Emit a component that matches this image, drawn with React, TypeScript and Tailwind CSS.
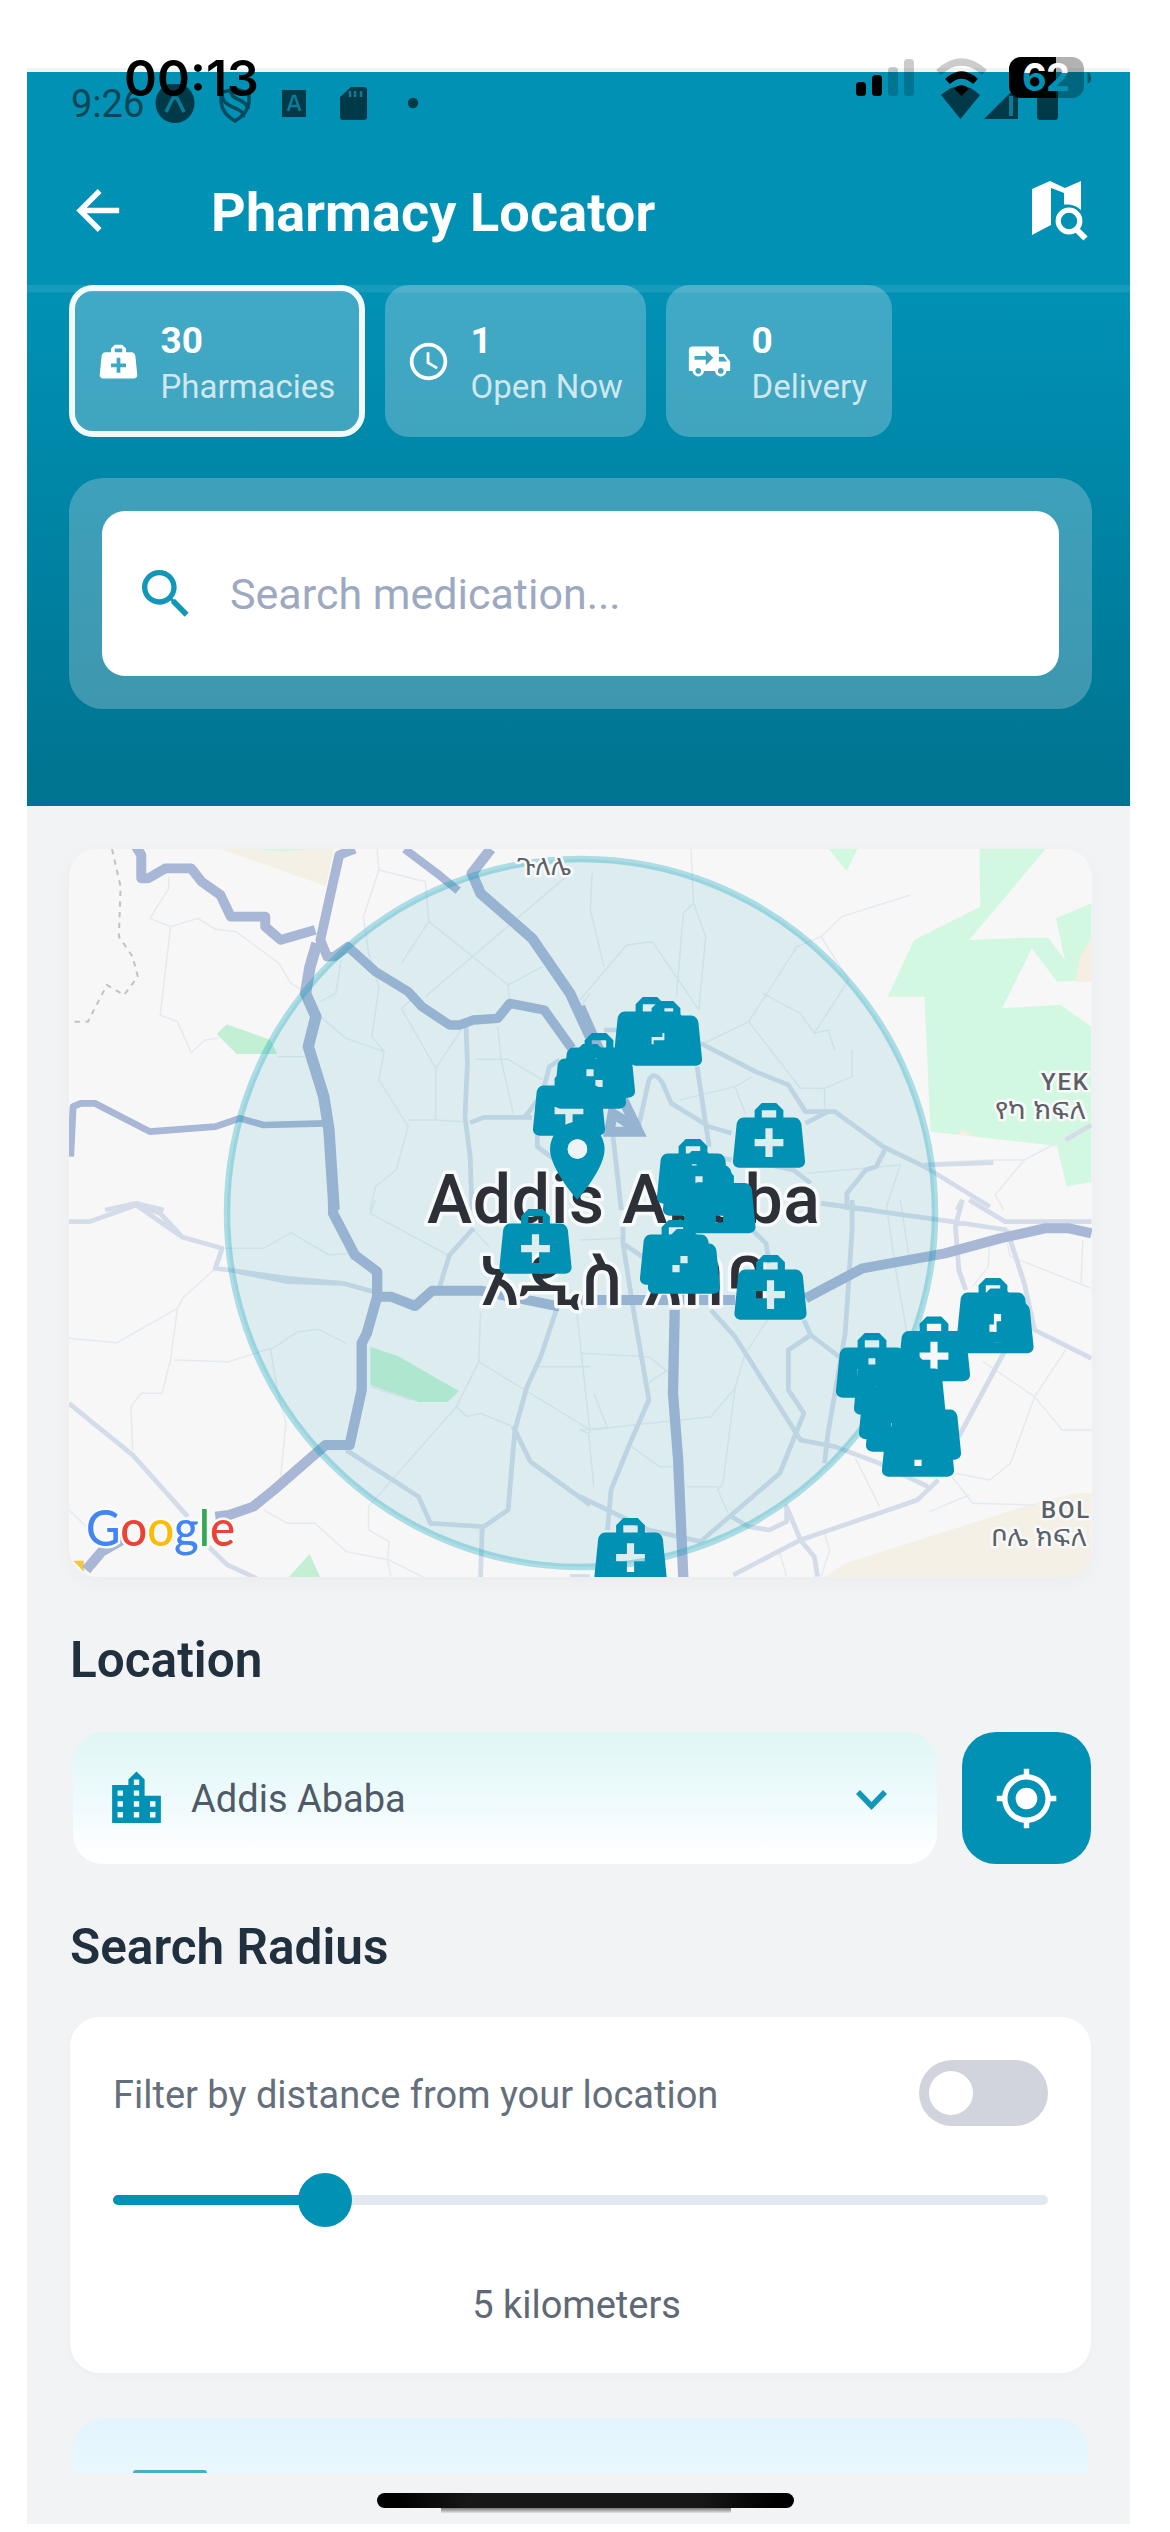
import React from "react";

const BAG =
  "M10,3L8,5V7H5C3.85,7 3.12,8 3,9L2,19C1.88,20 2.54,21 4,21H20C21.46,21 22.12,20 22,19L21,9C20.88,8 20.06,7 19,7H16V5L14,3H10M10,5H14V7H10V5M11,10H13V13H16V15H13V18H11V15H8V13H11V10Z";
const CLOCK =
  "M12,20A8,8 0 0,0 20,12A8,8 0 0,0 12,4A8,8 0 0,0 4,12A8,8 0 0,0 12,20M12,2A10,10 0 0,1 22,12A10,10 0 0,1 12,22C6.47,22 2,17.5 2,12A10,10 0 0,1 12,2M12.5,7V12.25L17,14.92L16.25,16.15L11,13V7H12.5Z";
const TRUCK =
  "M3 4A2 2 0 0 0 1 6V17H3A3 3 0 0 0 6 20A3 3 0 0 0 9 17H15A3 3 0 0 0 18 20A3 3 0 0 0 21 17H23V12L20 8H17V4M10 6L14 10L10 14V11H4V9H10M17 9.5H19.5L21.47 12H17M6 15.5A1.5 1.5 0 0 1 7.5 17A1.5 1.5 0 0 1 6 18.5A1.5 1.5 0 0 1 4.5 17A1.5 1.5 0 0 1 6 15.5M18 15.5A1.5 1.5 0 0 1 19.5 17A1.5 1.5 0 0 1 18 18.5A1.5 1.5 0 0 1 16.5 17A1.5 1.5 0 0 1 18 15.5Z";
const ARROW = "M20,11V13H8L13.5,18.5L12.08,19.92L4.16,12L12.08,4.08L13.5,5.5L8,11H20Z";
const SEARCH =
  "M15.5 14h-.79l-.28-.27C15.41 12.59 16 11.11 16 9.5 16 5.91 13.09 3 9.5 3S3 5.91 3 9.5 5.91 16 9.5 16c1.61 0 3.09-.59 4.23-1.57l.27.28v.79l5 4.99L20.49 19l-4.99-5zm-6 0C7.01 14 5 11.99 5 9.5S7.01 5 9.5 5 14 7.01 14 9.5 11.99 14 9.5 14z";
const CITY =
  "M15 11V5l-3-3-3 3v2H3v14h18V11h-6zm-8 8H5v-2h2v2zm0-4H5v-2h2v2zm0-4H5V9h2v2zm6 8h-2v-2h2v2zm0-4h-2v-2h2v2zm0-4h-2V9h2v2zm0-4h-2V5h2v2zm6 12h-2v-2h2v2zm0-4h-2v-2h2v2z";
const GPS =
  "M12 8c-2.21 0-4 1.79-4 4s1.79 4 4 4 4-1.79 4-4-1.79-4-4-4zm8.94 3c-.46-4.17-3.77-7.48-7.94-7.94V1h-2v2.06C6.83 3.52 3.52 6.83 3.06 11H1v2h2.06c.46 4.17 3.77 7.48 7.94 7.94V23h2v-2.06c4.17-.46 7.48-3.77 7.94-7.94H23v-2h-2.06zM12 19c-3.87 0-7-3.13-7-7s3.13-7 7-7 7 3.13 7 7-3.13 7-7 7z";

function Icon({ d, className }: { d: string; className: string }) {
  return (
    <svg viewBox="0 0 24 24" className={className} fill="currentColor" fillRule="evenodd">
      <path d={d} />
    </svg>
  );
}

function MapSearch() {
  return (
    <svg viewBox="0 0 58 61" className="h-[61px] w-[58px]" fill="white">
      <path d="M1 9 19 1 20 7.500V45L1 55Z" />
      <path d="M19 1 34 8 50 1V30C45 25.500 40 24 33 24.500V13L19 7.500Z" />
      <circle cx="38" cy="41" r="10.800" fill="none" stroke="white" strokeWidth="5.200" />
      <path d="M45 49 54.500 58.500" stroke="white" strokeWidth="6" />
    </svg>
  );
}

function AndroidIcons() {
  return (
    <svg viewBox="0 0 280 40" className="ml-[6px] h-[40px] w-[280px]" fill="#003a48">
      <ellipse cx="24" cy="19" rx="19.500" ry="20" />
      <path d="M15 28 22 14H26L33 28" stroke="#0a7c98" strokeWidth="3.500" fill="none" />
      <path d="M84 4C76 8 73 8 70 8V18C71 28 77 33 84 37C91 33 97 28 98 18V8C95 8 91 8 84 4Z" fill="none" stroke="#004a5c" strokeWidth="3.500" />
      <path d="M71 10C71 20 80 22 86 25S93 31 92 33M80 7C80 14 88 15 92 18S97 23 97 25" fill="none" stroke="#004a5c" strokeWidth="3.500" />
      <path d="M131 6H155V33H131Z" />
      <path d="M137 27 142 12H144L149 27M139 22H147" fill="none" stroke="#0a7c98" strokeWidth="2.500" />
      <path d="M200 3H213Q216 3 216 6V33Q216 36 213 36H192Q189 36 189 33V13Z" />
      <path d="M199 7V13M204 7V13M210 7V13" stroke="#0a7c98" strokeWidth="2.500" />
      <circle cx="262" cy="19" r="5.200" />
    </svg>
  );
}

function StatusOverlay() {
  return (
    <div className="absolute top-[52px] left-0 flex h-[52px] w-[1170px] items-center">
      <span className="ml-[124px] w-[200px] font-['Inter'] text-[50px] leading-[52px] font-semibold text-black">00:13</span>
      <svg viewBox="0 0 250 52" className="ml-[526px] h-[52px] w-[250px] shrink-0">
        <rect x="6" y="30" width="10" height="14" rx="3.500" />
        <rect x="22" y="23" width="10" height="21" rx="3.500" />
        <rect x="38" y="15" width="10" height="29" rx="3.500" opacity=".2" />
        <rect x="54" y="7" width="10" height="37" rx="3.500" opacity=".2" />
        <path d="M88.500 20.500Q111.500-.5 134.500 20.500" fill="none" stroke="#000" strokeOpacity=".2" strokeWidth="7" />
        <path d="M97.500 29.500Q111.500 16.500 125.500 29.500" fill="none" stroke="#000" strokeWidth="7" />
        <path d="M104 36.500Q111.500 29.500 119 36.500L111.500 44Z" />
        <path d="M206 5H222A12 12 0 0 1 234 17V34A12 12 0 0 1 222 46H206Z" opacity=".3" />
        <path d="M206 5H171A12 12 0 0 0 159 17V34A12 12 0 0 0 171 46H206Z" />
        <path d="M237.500 20Q241 21 241 26T237.500 31.500Z" opacity=".4" />
        <defs>
          <linearGradient id="pct" gradientUnits="userSpaceOnUse" x1="0" x2="0" y1="16" y2="26">
            <stop offset="0" stopColor="#fff" />
            <stop offset=".5" stopColor="#eeeef6" />
            <stop offset=".5" stopColor="#0092b5" />
          </linearGradient>
        </defs>
        <text x="172" y="39" textLength="48" fontFamily="Inter" fontWeight="700" fontSize="38" fill="url(#pct)">62</text>
      </svg>
    </div>
  );
}

function Chip({ d, n, label, className }: { d: string; n: string; label: string; className: string }) {
  return (
    <div className={`flex h-[152px] shrink-0 items-center rounded-[24px] bg-[#d5e5ed]/30 pl-[21px] text-white ${className}`}>
      <Icon d={d} className="h-[45px] w-[45px] shrink-0" />
      <div className="ml-[20px] pt-[5px]">
        <div className="text-[37px] leading-[46px] font-bold">{n}</div>
        <div className="text-[33px] leading-[45px] whitespace-nowrap text-white/75">{label}</div>
      </div>
    </div>
  );
}

const pins: [number, number][] = [
  [581, 148], [597, 152], [530, 184], [521, 195], [500, 222], [700, 254], [624, 290], [630, 302],
  [650.5, 319.500], [607, 371], [615, 380], [701.5, 406], [924, 429], [928.5, 439.500], [865, 467.500],
  [803, 484], [821, 501], [840.5, 505], [826, 525.500], [833, 538], [856, 546], [849, 563], [561.5, 669], [466.5, 360],
];

function Roads({ thin, minor, major }: { thin: string; minor: string; major: string }) {
  return (
    <g fill="none" strokeLinejoin="round">
      <path d={thin} stroke="#e5eaf0" strokeWidth="4.500" />
      <path d={minor} stroke="#d3dce8" strokeWidth="14" />
      <path d={major} stroke="#a8b7d5" strokeWidth="30" />
    </g>
  );
}

function CityMap() {
  return (
    <svg viewBox="0 0 1023 728" className="h-[728px] w-[1023px]">
      <rect width="1023" height="728" fill="#f7f7f7" />
      {/* north-west */}
      <g transform="translate(-19 -19) scale(.3444 .3333)">
        <path d="M495 57H825L800 168Z" fill="#f4f0e5" />
        <path d="M600 57H750Q680 72 600 57Z" fill="#d3f8e2" />
        <path d="M513 583 640 630 660 672H542L484 612Z" fill="#c3f0d4" />
        <Roads
          thin="M345 140V175L290 265 350 290 320 555 370 575 410 668 450 630 490 625M350 290 430 265 480 298 540 305 665 400 700 460 730 480M950 57 955 120 1090 155 1100 275 1330 465 1430 410M955 120 910 260 925 370 955 470 935 620 970 665 955 750 1040 890 1005 1020 945 1070 930 1140M1100 275 1020 400M1510 130 1090 500M845 390 830 490 785 515M785 560 860 625 970 665M1060 500 1020 535 1120 715 1200 590M1120 715V870H1040M1120 870 1200 875M1300 590 1310 690 1345 850M1235 688H1330L1430 750M660 680H740M1330 465 1335 510M1568 490 1540 530"
          minor="M1208 590 1212 700 1205 860 1220 980 1225 1140M1220 878 1260 862H1400M1480 690 1450 710 1430 790 1380 860M1415 910V950L1460 985M160 1140 250 1120 330 1140"
          major=""
        />
        <g fill="none" stroke="#a8b7d5" strokeLinejoin="round">
          <path d="M250 50 265 75V145H285L335 115H410L440 155 495 195 525 260H625V290L670 330 770 300" strokeWidth="29" />
          <path d="M885 57 840 75 815 190 785 330 805 380H825L865 350 945 425 1040 485 1080 530 1160 585H1190L1230 570 1300 565 1335 520 1435 540 1515 655" strokeWidth="28" />
          <path d="M1030 57 1130 135 1185 182" strokeWidth="24" />
          <path d="M1280 57 1225 130 1250 190 1400 325 1510 490 1568 620" strokeWidth="31" />
          <path d="M775 340 755 410 742 490 772 560 750 650 795 800 810 900 825 1140" strokeWidth="33" />
          <path d="M60 980 67 830 90 820H130L290 905 480 890 550 865 620 885 800 880" strokeWidth="20" />
        </g>
        <path d="M180 57 205 170 200 320 240 380 255 440 215 495 165 465 110 575H70" fill="none" stroke="#c3c3c3" strokeWidth="6" strokeDasharray="16 16" />
      </g>
      {/* north-east */}
      <g transform="translate(511 -19) scale(.3444 .3333)">
        <g fill="#d3f8e2">
          <path d="M722 57H806L774 123Z" />
          <path d="M1160 57H1352L1130 330 1300 323H1360L1408 390 1382 265 1485 220V590L1395 524 1226 535 1312 355 1385 455 1485 450V1055L1413 1070 1385 948 1150 920 1018 905 1000 500H893L970 330 1162 230Z" />
        </g>
        <path d="M1385 455 1485 450V590L1395 524 1226 535 1312 355Z" fill="#f7f7f7" />
        <path d="M1485 325V455H1438L1452 380ZM1095 915 1112 897 1140 918Z" fill="#f6eee2" />
        <Roads
          thin="M322 57 330 220 365 320 345 540M330 220 300 250 280 500M0 510 135 345 210 335 345 540M35 130 30 240 70 410M960 195 760 260 700 320 630 350 490 575 350 645M700 320 780 450 680 610 640 550 530 490M490 575 640 775H710L790 740V660M290 810 450 770 500 740M450 770 480 850M680 610 720 600 740 660M710 775V840M1000 1000 1190 990 1290 990 1400 930 1485 890M1290 990 1205 1095 1230 1140M660 1030 930 1005 890 1130"
          minor="M350 640 510 725 605 765 655 845H740L880 950 1000 1010 1190 1130M1000 1005 1200 998M655 880 720 845M170 890 200 750Q215 720 240 760L265 820 375 890 440 910M340 710 375 950M885 960 860 1010 830 1020 775 1090V1140M95 910 120 1140M700 1120 850 1140M1110 1110 1095 1140M1410 930 1485 885M460 985 620 1020 670 1060M70 600 110 600M380 975 440 990"
          major=""
        />
        <path d="M0 530 60 670 170 905H85L95 850 170 900" fill="none" stroke="#a8b7d5" strokeWidth="30" />
      </g>
      {/* south-west */}
      <g transform="translate(-19 351) scale(.3444 .3333)">
        <path d="M930 440 1010 468 1187 573 1155 606H1070L930 555Z" fill="#c3f0d4" />
        <path d="M754 1062 786 1135H690Z" fill="#c3f0d4" />
        <path d="M68 1082H98V1115Z" fill="#f3c63d" />
        <Roads
          thin="M55 415 195 428 370 325 385 295 480 205M370 325 350 480 325 580H265L235 620 240 750M360 480 520 485 640 445 660 570 685 670 670 830M640 450 720 395 780 388 860 430M510 145H620L700 98 810 165 870 160M945 0 930 40 1155 165M1250 340 1245 485 1568 690M1245 485 1180 620 925 920V990L985 1025 980 1080 990 1130M620 930 690 970H770L860 1055 985 1080 1090 1135M55 930 110 985M930 560 1050 600M1180 620 1210 650 1250 640 1345 680M1410 500H1568M1530 340 1545 480 1568 700M1230 90 1275 140"
          minor="M55 65H115L250 15 320 40 385 112 500 145 480 205 520 210 690 245 850 250 940 275M250 15 385 112M530 212 690 235 850 250M1230 85 1160 165 1130 265M55 610 240 765 400 950M460 1040 515 1095 600 1135M860 750 1070 890 1105 970 1260 980 1330 930 1350 690 1385 560 1425 470 1470 330M1345 680 1395 785 1568 915M1255 980 1250 1135M1510 1130H1568"
          major="M822 0V40L885 165 950 215V290L920 400 905 430V570L870 735H800L650 870 590 920 520 945 480 950M950 290H990L1060 318 1110 272H1250L1480 320M210 1020 150 1055 105 1110"
        />
      </g>
      {/* south-east */}
      <g transform="translate(511 351) scale(.3444 .3333)">
        <path d="M705 1135 770 1090 1320 910 1440 880H1485V1135Z" fill="#f4f0e5" />
        <Roads
          thin="M0 460 200 470 260 520M270 500 190 555M40 580 80 685 0 690 25 700 40 860M0 690 80 683 380 650 450 565 415 850 400 870 430 940M150 740 230 800H270M310 860H400M545 360 480 460 450 565M890 20 920 230 950 400M930 0 960 200M1170 485 1320 590 1400 690H1485M1410 450 1320 590 1250 790 1190 840 1090 820M1080 830 1140 910 1320 915M1015 935 1130 885M800 775 870 920M710 1000 725 1050 700 1130M580 1060 600 1130M1190 130 1185 200 1140 260M1240 130 1250 170 1485 265M1460 120 1455 250M0 120 120 115"
          minor="M125 80V130L155 330 200 600 145 730 90 870 80 990M0 890 60 920 200 990 350 1025M125 130 180 170M350 1025 580 820 650 640 605 570V450L670 405 650 360M670 405 790 500M380 330 450 410 640 720 740 740 870 790 1010 860M790 0V90L770 400 720 700 710 790M700 10 1080 65 1240 90M440 950 490 980 550 990 600 965V920L640 1020 680 1070 690 1130M445 1125 640 1020 980 900 1040 840M1240 440 1100 710M1110 0 1090 80 1100 210 1120 270M1130 0 1235 65H1485M1240 90 1290 250 1320 390 1485 475M500 90 540 130 550 190"
          major="M0 300H450M655 295 820 205 1060 160 1220 115 1350 85H1420L1485 100M275 330 270 580 285 780 300 1135"
        />
      </g>
      <circle cx="512" cy="364" r="354" fill="#0091b4" fillOpacity=".1" stroke="#009fb8" strokeOpacity=".3" strokeWidth="6.500" />
      <g fontFamily="'Noto Sans Ethiopic', Roboto, 'Noto Sans', sans-serif" stroke="#f7f9fa" strokeWidth="7" strokeLinejoin="round" paintOrder="stroke" fill="#2e3038">
        <text x="358" y="374" fontFamily="Roboto" fontSize="68" fontWeight="500" textLength="393">Addis Ababa</text>
        <text x="410" y="456" fontSize="68" fontWeight="500" textLength="290" lengthAdjust="spacingAndGlyphs">አዲስ አበባ</text>
        <g strokeWidth="5" fill="#5c6065">
          <text x="448" y="26" fontSize="24" textLength="54" lengthAdjust="spacingAndGlyphs">ጉለሌ</text>
          <text x="972" y="241" fontFamily="Roboto" fontSize="24" fontWeight="500" letterSpacing="1.800">YEK</text>
          <text x="926" y="270" fontSize="24" textLength="91" lengthAdjust="spacingAndGlyphs">የካ ክፍለ</text>
          <text x="972" y="669" fontFamily="Roboto" fontSize="24" fontWeight="500" letterSpacing="1.800">BOL</text>
          <text x="922" y="697" fontSize="24" textLength="96" lengthAdjust="spacingAndGlyphs">ቦሌ ክፍለ</text>
        </g>
      </g>
      <g fill="#0091b4" fillRule="evenodd">
        {pins.map(([x, y], i) => (
          <path key={i} d={BAG} transform={`translate(${x - 43.2} ${y - 10.8}) scale(3.6)`} />
        ))}
        <path d="M12 11.500A2.500 2.500 0 0 1 9.500 9A2.500 2.500 0 0 1 12 6.500A2.500 2.500 0 0 1 14.500 9A2.500 2.500 0 0 1 12 11.500M12 2A7 7 0 0 0 5 9C5 14.250 12 22 12 22S19 14.250 19 9A7 7 0 0 0 12 2Z" transform="translate(461.500 265) scale(3.9)" />
        <circle cx="508.500" cy="300" r="9.800" fill="#eef4f6" />
      </g>
      <text x="17" y="697" fontFamily="Lato" fontSize="51" fontWeight="500" textLength="149" lengthAdjust="spacingAndGlyphs" stroke="#fafafa" strokeWidth="5" paintOrder="stroke">
        <tspan fill="#4285f4">G</tspan><tspan fill="#ea4335">o</tspan><tspan fill="#fbbc05">o</tspan><tspan fill="#4285f4">g</tspan><tspan fill="#34a853">l</tspan><tspan fill="#ea4335">e</tspan>
      </text>
    </svg>
  );
}

export default function App() {
  return (
    <div className="relative h-[2532px] w-[1170px] overflow-hidden bg-white pt-[68px] font-['Roboto',sans-serif]">
      <div className="ml-[27px] flex h-[2456px] w-[1103px] flex-col overflow-hidden bg-[#f2f3f5] pt-[4px]">
        <header className="h-[734px] shrink-0 bg-[linear-gradient(#0091b5_0px,#0091b5_225px,#007592_700px,#007490_734px)]">
          <div className="flex h-[64px] items-center text-[#0c4656]">
            <span className="ml-[44px] w-[74px] text-[38px] leading-[44px]">9:26</span>
            <AndroidIcons />
            <svg viewBox="0 0 120 40" className="ml-auto mr-[70px] h-[40px] w-[120px]" fill="#003a48">
              <path d="M1 11Q21-7 40 11L20.500 35Z" />
              <path d="M44 35 78 1V35Z" />
              <path d="M71 12V32" stroke="#0a7c98" strokeWidth="4" />
              <rect x="97" y="2" width="21" height="34" rx="3" />
            </svg>
          </div>
          <div className="flex h-[149px] items-center pr-[41px] pl-[38px] text-white">
            <Icon d={ARROW} className="h-[65px] w-[65px]" />
            <h1 className="ml-[81px] flex-1 pt-[4px] text-[54px] leading-[64px] font-bold tracking-[0.1px] whitespace-nowrap">Pharmacy Locator</h1>
            <MapSearch />
          </div>
          <div className="bg-[linear-gradient(rgba(255,255,255,.09)_0px,rgba(255,255,255,.09)_7px,transparent_8px)] pl-[41.5px]">
            <div className="flex gap-[20px]">
              <Chip d={BAG} n="30" label="Pharmacies" className="w-[296px] border-[6.5px] border-white/95 bg-clip-padding" />
              <Chip d={CLOCK} n="1" label="Open Now" className="w-[261px]" />
              <Chip d={TRUCK} n="0" label="Delivery" className="w-[226px]" />
            </div>
          </div>
          <div className="mt-[41px] ml-[42px] h-[231px] w-[1023px] rounded-[34px] bg-[#e5e9ef]/27 px-[33px] pt-[33px]">
            <div className="flex h-[165px] items-center rounded-[23px] bg-white pl-[32px]">
              <Icon d={SEARCH} className="h-[64px] w-[64px] text-[#1297b8]" />
              <span className="ml-[32px] text-[43px] leading-[52px] text-[#9ca9c0]">Search medication...</span>
            </div>
          </div>
        </header>

        <main className="flex flex-col pr-[38px] pl-[42px]">
          <div className="mt-[43px] h-[728px] w-[1023px] overflow-hidden rounded-[28px] shadow-[0_6px_20px_rgba(0,0,0,0.03)]">
            <CityMap />
          </div>

          <h2 className="mt-[53px] h-[60px] pl-px text-[49.5px] leading-[60px] font-semibold text-[#21303e]">Location</h2>
          <div className="mt-[42px] flex h-[132px] pl-[4px]">
            <div className="flex w-[864px] items-center rounded-[30px] bg-[linear-gradient(#e0f6f5,#f1fbfd_60%,#fff_92%)] pr-[33px] pl-[31px]">
              <Icon d={CITY} className="h-[65px] w-[65px] text-[#0091b4]" />
              <span className="ml-[22px] flex-1 pt-[1px] text-[38px] leading-[48px] text-[#4f5a67]">Addis Ababa</span>
              <svg viewBox="0 0 65 65" className="h-[65px] w-[65px]" fill="none">
                <path d="M19 26 32.500 40 46 26" stroke="#1297b8" strokeWidth="5.500" />
              </svg>
            </div>
            <div className="ml-[25px] flex w-[129px] items-center justify-center rounded-[34px] bg-[#0091b4]">
              <Icon d={GPS} className="h-[65px] w-[65px] text-white" />
            </div>
          </div>

          <h2 className="mt-[53px] h-[60px] pl-px text-[49.5px] leading-[60px] font-semibold text-[#21303e]">Search Radius</h2>
          <section className="mt-[40px] ml-[1px] flex h-[356px] w-[1021px] flex-col rounded-[30px] bg-white pr-[43px] pl-[43px] shadow-[0_3px_8px_rgba(0,0,0,0.02)]">
            <div className="mt-[43px] flex h-[66px] items-center justify-between">
              <span className="pt-[4px] text-[38px] leading-[48px] whitespace-nowrap text-[#656f7c]">Filter by distance from your location</span>
              <div className="flex h-[66px] w-[129px] items-center rounded-full bg-[#d1d4dd] pl-[10px]">
                <div className="h-[44px] w-[44px] rounded-full bg-white" />
              </div>
            </div>
            <div className="mt-[47px] flex h-[54px] items-center">
              <div className="h-[10px] w-[190px] rounded-l-full bg-[#0091b4]" />
              <div className="relative z-10 -ml-[5px] h-[54px] w-[54px] rounded-full bg-[#0091b4]" />
              <div className="-ml-[27px] h-[10px] flex-1 rounded-r-full bg-[#e1e8f2]" />
            </div>
            <div className="mt-[53px] mr-[8px] text-center text-[38px] leading-[50px] text-[#5f6976]">5 kilometers</div>
          </section>

          <div className="mt-[46px] ml-[4px] flex h-[54px] w-[1015px] items-end rounded-t-[30px] bg-[linear-gradient(#e2f4fe,#e9f8fe)]">
            <div className="ml-[60px] h-[3px] w-[74px] rounded-t bg-[#45b0c9]" />
          </div>
        </main>
      </div>

      <StatusOverlay />
      <div className="absolute top-[2493px] left-[377px] flex w-[417px] flex-col items-center">
        <div className="h-[15px] w-full rounded-full bg-[linear-gradient(90deg,#000_5%,#171717_22%,#171717_78%,#000_95%)]" />
        <div className="h-[5px] w-[290px] bg-[linear-gradient(#777,#e5e5e7)]" />
      </div>
    </div>
  );
}
